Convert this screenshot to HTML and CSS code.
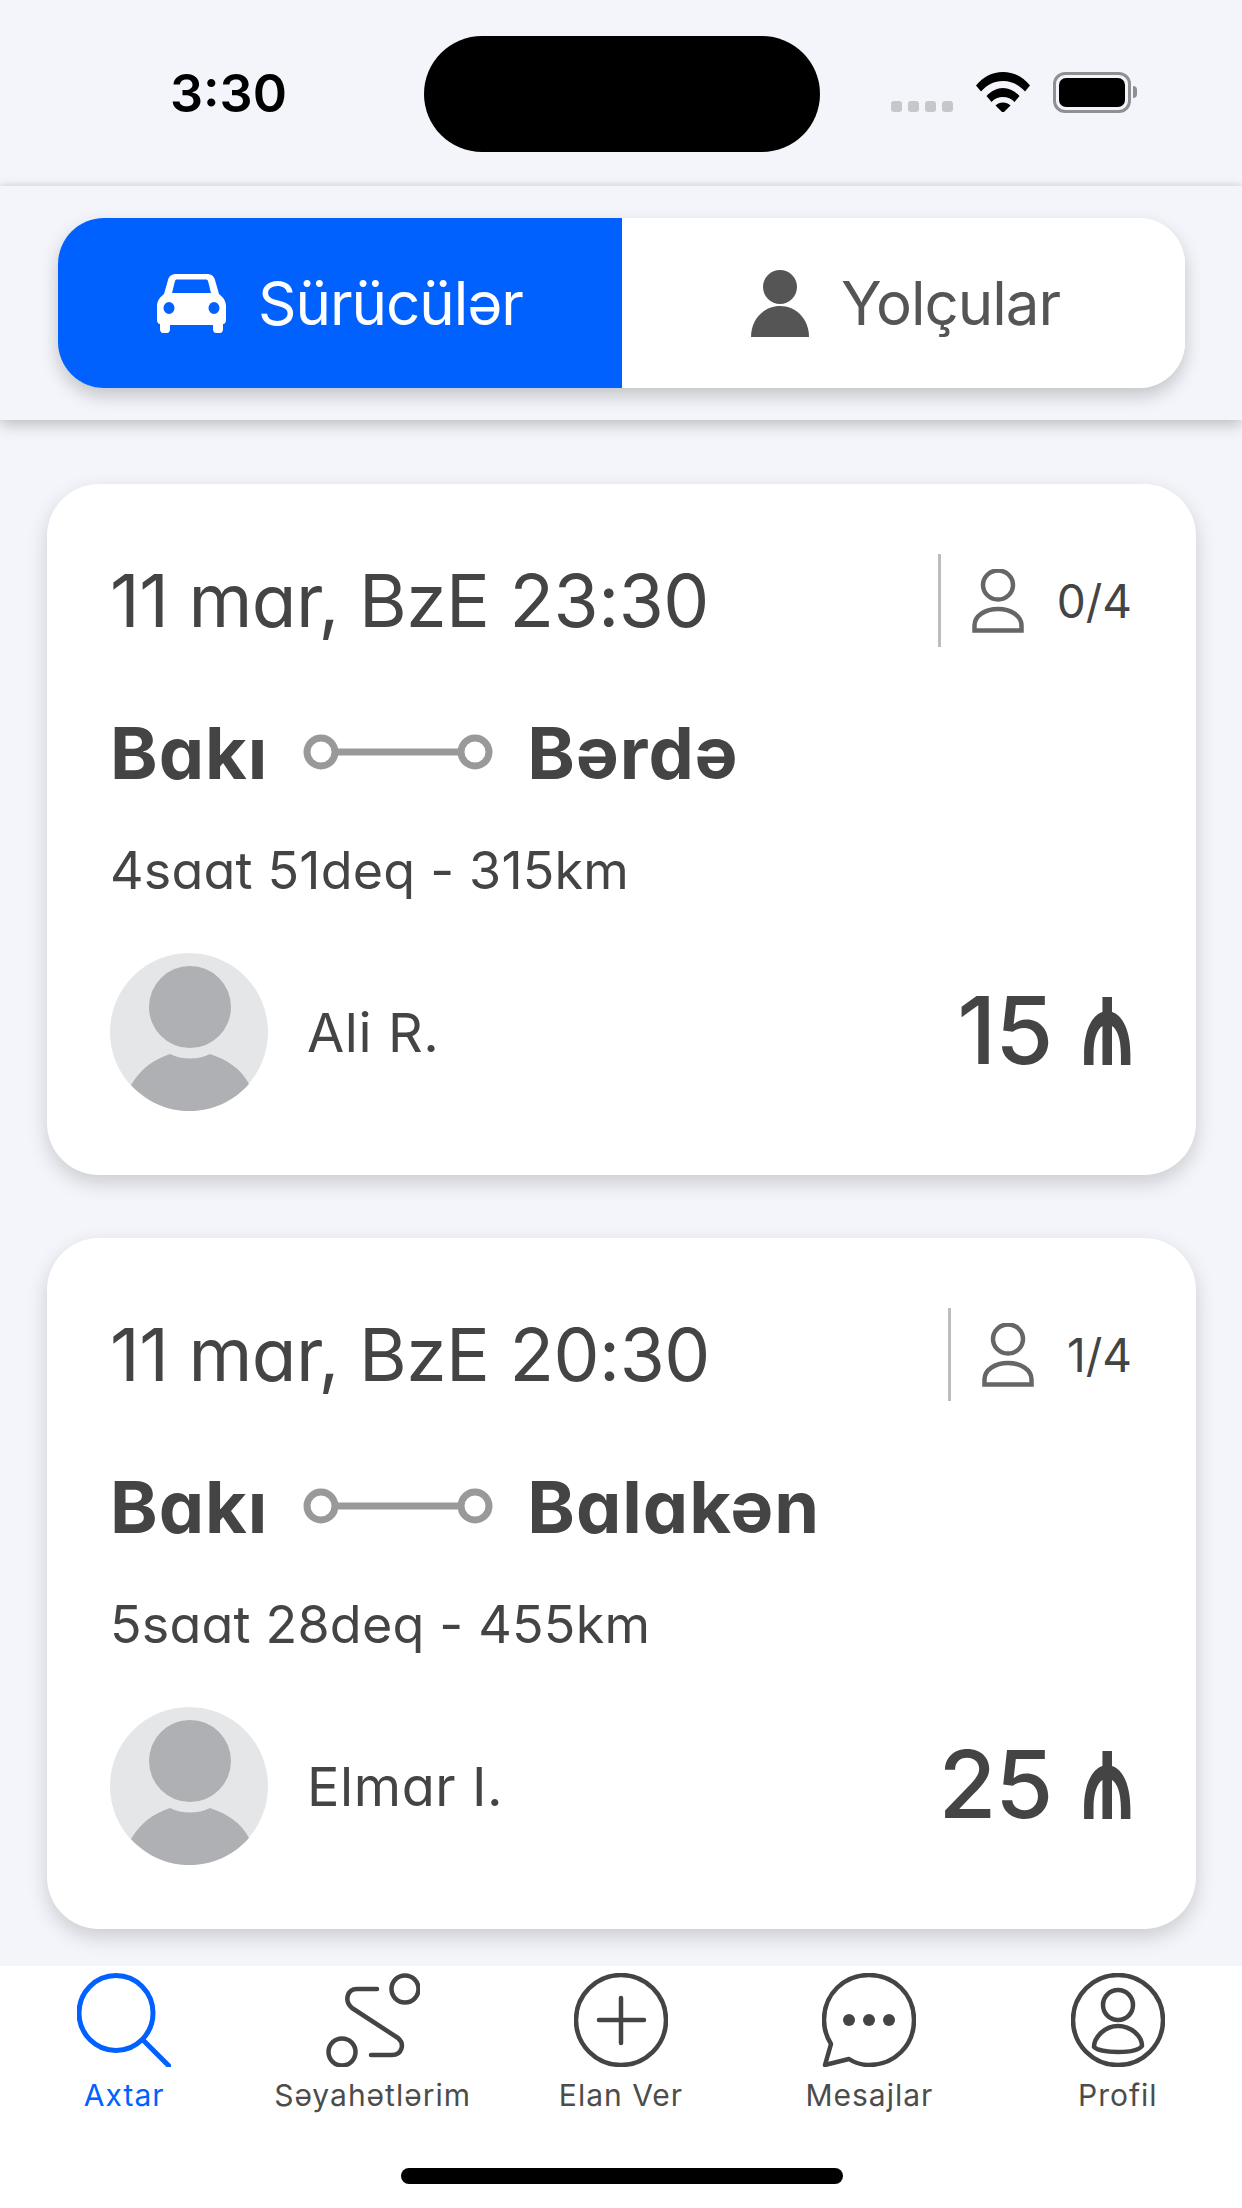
FILE: index.html
```html
<!DOCTYPE html>
<html lang="az">
<head>
<meta charset="utf-8">
<title>Axtar</title>
<link rel="stylesheet" href="styles.css">
</head>
<body>
<div class="app">
  <div class="status">
    <span class="time">3:30</span>
    <div class="island"></div>
    <div class="status-icons">
      <div class="signal"><i></i><i></i><i></i><i></i></div>
      <svg class="wifi" viewBox="0 0 54 40"><path d="M0 13.500C7 5 16 0 27 0s20 5 27 13.500l-5 6C43 13 36 9 27 9S11 13 5 19.500z"/><path d="M10.500 24C15 19 21 16 27 16s12 3 16.500 8l-5 6C35.500 26.500 31.500 25 27 25s-8.500 1.500-11.500 5z"/><path d="M19.500 33.500C21.500 31.500 24 30.500 27 30.500s5.500 1 7.500 3L27 41z"/></svg>
      <div class="battery"><div class="battery-fill"></div></div>
      <div class="battery-tip"></div>
    </div>
  </div>

  <header class="header">
    <div class="segment">
      <div class="seg seg-on">
        <svg class="car" viewBox="0 0 69 59"><path fill-rule="evenodd" d="M19 0h31c4 0 7 2 8 6l4 14c4 3 7 7 7 12v14c0 2-1 4-3 4v5c0 2-1 4-3 4h-4c-2 0-3-2-3-4v-4H13v4c0 2-1 4-3 4H6c-2 0-3-2-3-4v-5c-2 0-3-2-3-4V32c0-5 3-9 7-12l4-14c1-4 4-6 8-6zm-1 7-3 12h39l-3-12c-.4-1-1-1.500-2-1.500H20c-1 0-1.600.5-2 1.500zM12 28a5.500 6 0 1 0 0 12 5.500 6 0 0 0 0-12zm45 0a5.500 6 0 1 0 0 12 5.500 6 0 0 0 0-12z"/></svg>
        <span>Sürücülər</span>
      </div>
      <div class="seg">
        <svg class="person" viewBox="0 0 58 67"><ellipse cx="29" cy="17" rx="17" ry="17"/><path d="M29 36c16 0 29 13 29 31H0c0-18 13-31 29-31z"/></svg>
        <span>Yolçular</span>
      </div>
    </div>
  </header>

  <main class="list">
    <article class="card">
      <div class="card-top">
        <span class="date">11 mar, BzE 23:30</span>
        <div class="seats">
          <svg class="seat-icon" viewBox="0 0 52 64"><ellipse cx="26" cy="16" rx="15" ry="14.500"/><path d="M2.500 61.500v-5C2.500 47 13 40 26 40s23.500 7 23.500 16.500v5z"/></svg>
          <span class="seat-count">0/4</span>
        </div>
      </div>
      <div class="route">
        <span>Bakı</span>
        <svg class="link" viewBox="0 0 190 40"><circle cx="18" cy="20" r="14"/><circle cx="172" cy="20" r="14"/><path d="M32 20h126"/></svg>
        <span>Bərdə</span>
      </div>
      <div class="meta">4saat 51deq - 315km</div>
      <div class="card-foot">
        <svg class="avatar" viewBox="0 0 158 158"><circle class="av-bg" cx="79" cy="79" r="79"/><ellipse class="av-fg" cx="80" cy="54" rx="41" ry="41"/><path class="av-fg" d="M21 132C31 116 42 107 60 101c12 6 28 6 40 0 18 6 31 15 39 30-15 17-36 27-60 27-23 0-43-10-58-26z"/></svg>
        <span class="name">Ali R.</span>
        <span class="price">15 <span class="manat">₼</span></span>
      </div>
    </article>

    <article class="card">
      <div class="card-top">
        <span class="date">11 mar, BzE 20:30</span>
        <div class="seats">
          <svg class="seat-icon" viewBox="0 0 52 64"><ellipse cx="26" cy="16" rx="15" ry="14.500"/><path d="M2.500 61.500v-5C2.500 47 13 40 26 40s23.500 7 23.500 16.500v5z"/></svg>
          <span class="seat-count">1/4</span>
        </div>
      </div>
      <div class="route">
        <span>Bakı</span>
        <svg class="link" viewBox="0 0 190 40"><circle cx="18" cy="20" r="14"/><circle cx="172" cy="20" r="14"/><path d="M32 20h126"/></svg>
        <span>Balakən</span>
      </div>
      <div class="meta">5saat 28deq - 455km</div>
      <div class="card-foot">
        <svg class="avatar" viewBox="0 0 158 158"><circle class="av-bg" cx="79" cy="79" r="79"/><ellipse class="av-fg" cx="80" cy="54" rx="41" ry="41"/><path class="av-fg" d="M21 132C31 116 42 107 60 101c12 6 28 6 40 0 18 6 31 15 39 30-15 17-36 27-60 27-23 0-43-10-58-26z"/></svg>
        <span class="name">Elmar I.</span>
        <span class="price">25 <span class="manat">₼</span></span>
      </div>
    </article>
  </main>

  <nav class="tabs">
    <div class="tab tab-on">
      <svg class="tab-icon" viewBox="0 0 94 94"><ellipse cx="39" cy="40" rx="37" ry="37.500"/><path class="thin" d="M67 68l25 25"/></svg>
      <span>Axtar</span>
    </div>
    <div class="tab">
      <svg class="tab-icon" viewBox="0 0 94 94"><circle cx="79" cy="16" r="13.500"/><circle cx="16" cy="79" r="13.500"/><path d="M51 16H31C21 16 18 28 26 35L72 65C79 71 76 82 66 82H45"/></svg>
      <span>Səyahətlərim</span>
    </div>
    <div class="tab">
      <svg class="tab-icon" viewBox="0 0 94 94"><circle cx="47" cy="47" r="45"/><path d="M47 25v45M25 47h45"/></svg>
      <span>Elan Ver</span>
    </div>
    <div class="tab">
      <svg class="tab-icon" viewBox="0 0 94 94"><path d="M9 71C4 63 2 55 2 47 2 21 22 2 47 2s45 19 45 45-20 45-45 45c-8 0-14-2-20-6L3 92z"/><circle class="dot" cx="27" cy="47" r="6"/><circle class="dot" cx="47" cy="47" r="6"/><circle class="dot" cx="67" cy="47" r="6"/></svg>
      <span>Mesajlar</span>
    </div>
    <div class="tab">
      <svg class="tab-icon" viewBox="0 0 94 94"><circle cx="47" cy="47" r="45"/><ellipse cx="47" cy="32" rx="15" ry="15"/><path d="M23 74c0-10 11-21 24-21s24 10 24 20c-3 4-13 6-24 6s-21-2-24-5z"/></svg>
      <span>Profil</span>
    </div>
    <div class="home"></div>
  </nav>
</div>
</body>
</html>
```
FILE: styles.css
```css
* { box-sizing: border-box; }
html, body { margin: 0; padding: 0; }
body { background: #f3f5fa; font-family: Inter, "DejaVu Sans", sans-serif; color: #444; }
.app { width: 1242px; height: 2208px; overflow: hidden; display: flex; flex-direction: column; }

.status { height: 186px; flex: none; display: grid; grid-template-columns: 424px 396px 1fr; padding-top: 36px; }
.time { font-size: 52px; font-weight: 600; color: #000; text-align: right; padding-right: 137px; line-height: 116px; }
.island { width: 396px; height: 116px; background: #000; border-radius: 58px; }
.status-icons { display: flex; align-items: flex-start; padding: 36px 0 0 71px; }
.signal { display: flex; gap: 6px; margin-top: 29px; }
.signal i { width: 11px; height: 11px; border-radius: 3px; background: #c6c7ca; }
.wifi { width: 54px; height: 40px; fill: #000; margin: 0 0 0 23px; }
.battery { width: 78px; height: 41px; margin-left: 23px; border: 3px solid #8f9093; border-radius: 12px; padding: 3px; }
.battery-fill { width: 100%; height: 100%; background: #000; border-radius: 7px; }
.battery-tip { width: 4px; height: 12px; margin: 14px 0 0 2px; background: #8f9093; border-radius: 0 4px 4px 0; }

.header { height: 234px; flex: none; padding: 32px 57px 0 58px; background: #f3f5fa; box-shadow: 0 5px 14px rgba(0, 0, 0, .22), 0 -2px 5px rgba(0, 0, 0, .06); }
.segment { height: 170px; display: flex; border-radius: 46px; background: #fff; box-shadow: 0 8px 18px rgba(0, 0, 0, .2); }
.seg { flex: 1; display: flex; align-items: center; justify-content: center; gap: 32px; font-size: 60px; color: #555; background: #fff; border-radius: 0 46px 46px 0; letter-spacing: -1px; }
.seg-on { flex: 0 0 564px; background: #0061ff; color: #fff; border-radius: 46px 0 0 46px; }
.car { width: 69px; height: 59px; fill: #fff; }
.person { width: 58px; height: 67px; fill: #555; margin-left: 4px; }

.list { flex: 1; display: flex; flex-direction: column; gap: 63px; padding: 64px 46px 0 47px; min-height: 0; }
.card { height: 691px; flex: none; background: #fff; border-radius: 52px; padding: 70px 64px 64px 63px; box-shadow: 0 8px 20px rgba(0, 0, 0, .17); display: flex; flex-direction: column; }
.card-top { height: 93px; display: flex; align-items: center; justify-content: space-between; }
.date { font-size: 73px; font-weight: 400; letter-spacing: -.5px; font-feature-settings: "cv11"; white-space: nowrap; }
.seats { height: 93px; display: flex; align-items: center; border-left: 3px solid #bdbdbd; padding-left: 31px; }
.seat-icon { width: 52px; height: 64px; fill: none; stroke: #666; stroke-width: 4.500; }
.seat-count { font-size: 46px; font-weight: 400; margin-left: 33px; font-feature-settings: "cv11"; }

.route { height: 80px; margin-top: 65px; display: flex; align-items: center; font-size: 72px; font-weight: 700; letter-spacing: 1px; font-feature-settings: "cv11"; }
.link { width: 190px; height: 40px; margin: 0 34px 0 35px; fill: none; stroke: #999; stroke-width: 7; }

.meta { height: 60px; margin-top: 49px; font-size: 52px; font-weight: 400; letter-spacing: .2px; line-height: 60px; font-feature-settings: "cv11"; }

.card-foot { height: 158px; margin-top: 52px; display: flex; align-items: center; }
.avatar { width: 158px; height: 158px; flex: none; }
.av-bg { fill: #e5e6e8; }
.av-fg { fill: #afb0b3; }
.name { font-size: 54px; font-weight: 400; letter-spacing: .6px; margin-left: 39px; font-feature-settings: "cv11"; }
.price { margin: -4px -2px 0 auto; font-size: 94px; font-weight: 500; letter-spacing: -1px; white-space: nowrap; }
.manat { display: inline-block; margin-left: -12px; font-weight: 600; transform: scale(.8, 1.32); transform-origin: right 76%; }

.tabs { height: 242px; flex: none; background: #fff; display: grid; grid-template-columns: repeat(5, 1fr); align-content: start; padding-top: 7px; position: relative; }
.tab { display: flex; flex-direction: column; align-items: center; font-size: 30px; color: #4c4c4c; letter-spacing: 1px; line-height: 36px; white-space: nowrap; }
.tab-on { color: #0061ff; }
.tab-icon { width: 94px; height: 94px; fill: none; stroke: #444; stroke-width: 4.500; stroke-linecap: round; stroke-linejoin: round; margin-bottom: 10px; }
.tab-on .tab-icon { stroke: #0061ff; stroke-width: 5; }
.dot { fill: #444; stroke: none; }
.home { position: absolute; left: 401px; top: 202px; width: 442px; height: 16px; background: #000; border-radius: 8px; }
```
